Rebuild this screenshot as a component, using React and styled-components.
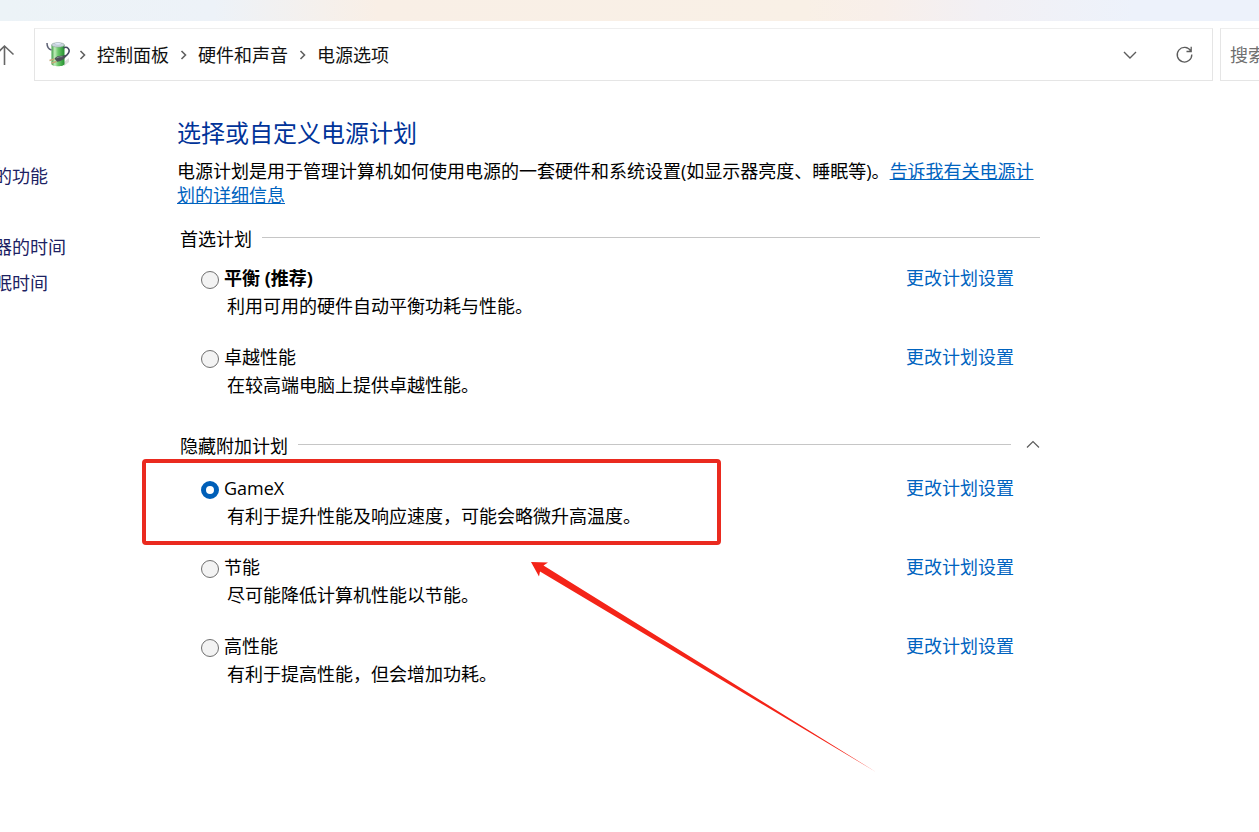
import React, { useState } from "react";
import styled, { createGlobalStyle } from "styled-components";

const GlobalStyle = createGlobalStyle`
    * {
        box-sizing: border-box;
    }

    body {
        margin: 0;
        background: #ffffff;
        color: #000000;
        font-family: "Open Sans", "Noto Sans CJK SC", sans-serif;
        font-size: 18px;
        line-height: 24px;
    }
`;

const Page = styled.div`
    min-height: 100vh;
`;

const TitleStrip = styled.div`
    height: 21px;
    background: linear-gradient(90deg, #ecf3f7 0%, #edf2f8 17%, #f9efe6 30%, #f9f0e6 64%, #f8efea 70%, #f2f0f4 78%, #edf2fb 90%, #edf2fb 100%);
`;

const Toolbar = styled.header`
    display: flex;
    align-items: stretch;
    height: 53px;
    margin-top: 7px;
`;

const UpButton = styled.button`
    display: flex;
    align-items: center;
    width: 34px;
    padding: 0;
    border: none;
    background: none;
    color: #666666;
`;

const AddressBar = styled.nav`
    display: flex;
    flex: 1;
    align-items: center;
    justify-content: space-between;
    padding: 0 18px 0 11px;
    border: 1px solid #e5e5e5;
    border-top-color: #eeeeee;
    margin-right: 7px;
`;

const Crumbs = styled.div`
    display: flex;
    align-items: center;
    gap: 10px;
`;

const Crumb = styled.a`
    color: #111111;
    text-decoration: none;
`;

const BarActions = styled.div`
    display: flex;
    align-items: center;
    gap: 37px;
`;

const IconButton = styled.button`
    display: flex;
    padding: 0;
    border: none;
    background: none;
    color: #5c5c5c;
    cursor: pointer;
`;

const SearchBox = styled.input`
    flex: 0 0 39px;
    min-width: 0;
    padding: 0 0 0 9px;
    border: 1px solid #e5e5e5;
    border-top-color: #eeeeee;
    border-right: none;
    font: inherit;
    outline: none;

    &::placeholder {
        color: #707070;
        opacity: 1;
    }
`;

const Body = styled.div`
    display: flex;
    align-items: flex-start;
    padding-top: 36px;
`;

const Sidebar = styled.aside`
    display: flex;
    flex-direction: column;
    flex: 0 0 183px;
    margin-left: -6px;
    padding-top: 41px;
    line-height: 36px;
`;

const SideLink = styled.a`
    color: #1d2263;
    text-decoration: none;

    &:first-child {
        margin-bottom: 35px;
    }
`;

const Main = styled.main`
    flex: 1;
    max-width: 863px;
`;

const Title = styled.h1`
    margin: 0 0 10px;
    color: #003399;
    font-size: 24px;
    font-weight: 400;
    line-height: 32px;
`;

const Intro = styled.p`
    margin: 0 0 20px;
`;

const TextLink = styled.a`
    color: #0063bf;
    text-decoration: ${props => (props.$underline ? "underline" : "none")};
`;

const Group = styled.section`
    margin-bottom: 32px;
`;

const GroupHead = styled.div`
    display: flex;
    align-items: center;
    min-height: ${props => (props.$tall ? "30px" : "24px")};
    margin-bottom: 13px;
    padding-left: 3px;
`;

const GroupName = styled.h2`
    margin: 0 10px 0 0;
    font-size: 18px;
    font-weight: 400;
`;

const Rule = styled.span`
    flex: 1;
    height: 1px;
    margin-right: ${props => (props.$tall ? "15px" : "0")};
    margin-bottom: 3px;
    background: #c6c6c6;
`;

const PlanList = styled.div`
    display: flex;
    flex-direction: column;
    gap: 23px;
`;

const PlanRow = styled.div`
    position: relative;
    display: flex;
    justify-content: space-between;
    padding: 0 26px 0 24px;
    line-height: 28px;
`;

const PlanLabel = styled.label`
    display: grid;
    grid-template-columns: 18px auto;
    column-gap: 5px;
    align-items: center;
    font-weight: ${props => (props.$bold ? 700 : 400)};
`;

const Radio = styled.input`
    appearance: none;
    width: 18px;
    height: 18px;
    margin: 4px 0 0;
    border: 1px solid #707070;
    border-radius: 50%;
    background: #f3f3f3;

    &:checked {
        border: 5px solid #005fb8;
        background: #ffffff;
    }
`;

const PlanNote = styled.p`
    margin: 0 0 0 26px;
`;

const Highlight = styled.div`
    position: absolute;
    top: -15px;
    bottom: -15px;
    left: -35px;
    width: 579px;
    border: 4px solid #ea2a1f;
    border-radius: 4px;
    pointer-events: none;
`;

const Arrow = styled.svg`
    position: absolute;
    top: 88px;
    left: 354px;
    pointer-events: none;
`;

const preferredPlans = [
    { id: "balanced", name: "平衡 (推荐)", note: "利用可用的硬件自动平衡功耗与性能。", bold: true },
    { id: "ultimate", name: "卓越性能", note: "在较高端电脑上提供卓越性能。" },
];

const extraPlans = [
    { id: "gamex", name: "GameX", note: "有利于提升性能及响应速度，可能会略微升高温度。", marked: true },
    { id: "saver", name: "节能", note: "尽可能降低计算机性能以节能。" },
    { id: "high", name: "高性能", note: "有利于提高性能，但会增加功耗。" },
];

const PowerIconSvg = styled.svg`
    margin-right: -3px;
`;

const PowerIcon = () => (
    <PowerIconSvg width="25" height="26" viewBox="0 0 25 26" aria-hidden="true">
        <defs>
            <linearGradient id="cell" x1="0" x2="1">
                <stop offset="0" stopColor="#3a9c42" />
                <stop offset="0.25" stopColor="#c0ebba" />
                <stop offset="0.5" stopColor="#6cc86b" />
                <stop offset="1" stopColor="#23902f" />
            </linearGradient>
        </defs>
        <path d="M18 20l5-4v4l-5 4z" fill="#dcdcdc" />
        <path d="M5.5 3v19c0 3 13 3 13 0V3z" fill="url(#cell)" />
        <ellipse cx="12" cy="2.900" rx="6.5" ry="2.2" fill="#c9d5dc" stroke="#8fa39b" strokeWidth="0.6" />
        <ellipse cx="12" cy="1.800" rx="3.2" ry="1.2" fill="#e3edf9" stroke="#9aa7b5" strokeWidth="0.4" />
        <path d="M1 1c0 4 1 6 4.500 7" fill="none" stroke="#5c6073" strokeWidth="1.5" />
        <path d="M17.500 6c4-2 7 1.500 5 5-1 1.500-2 2.500-4 4" fill="none" stroke="#464962" strokeWidth="1.5" />
        <path d="M8.500 16.500c2-2.500 5-3 7.500-2.800l4-1-0.500 2.500c-2 2.500-5 4-8.500 4.500z" fill="#4b5057" />
        <path d="M10.500 16c2-1 4-1.500 6-1.300" stroke="#969ba3" strokeWidth="0.8" fill="none" />
        <path d="M8.500 17l-5 1.500M10.500 19.500l-5 1.500" stroke="#c4a878" strokeWidth="1.400" />
    </PowerIconSvg>
);

const CrumbArrow = () => (
    <svg width="9" height="10" viewBox="0 0 9 10" aria-hidden="true">
        <path d="M2.500 1L6.500 5L2.500 9" fill="none" stroke="#606060" strokeWidth="1.600" />
    </svg>
);

const PlanGroup = ({ title, plans, selected, onSelect, collapsible }) => {
    const [open, setOpen] = useState(true);

    return (
        <Group>
            <GroupHead $tall={collapsible}>
                <GroupName>{title}</GroupName>
                <Rule $tall={collapsible} />
                {collapsible && (
                    <IconButton aria-label="展开或折叠" onClick={() => setOpen(!open)}>
                        <svg width="14" height="12" viewBox="0 0 14 12">
                            <path d="M1 7.500L7 1.500L13 7.500" fill="none" stroke="currentColor" strokeWidth="1.200" />
                        </svg>
                    </IconButton>
                )}
            </GroupHead>
            {open && (
                <PlanList>
                    {plans.map((plan) => (
                        <PlanRow key={plan.id}>
                            <div>
                                <PlanLabel $bold={plan.bold}>
                                    <Radio
                                        type="radio"
                                        name="power-plan"
                                        checked={selected == plan.id}
                                        onChange={() => onSelect(plan.id)}
                                    />
                                    {plan.name}
                                </PlanLabel>
                                <PlanNote>{plan.note}</PlanNote>
                            </div>
                            <TextLink href="#">更改计划设置</TextLink>
                            {plan.marked && (
                                <>
                                    <Highlight />
                                    <Arrow width="346" height="212" viewBox="0 0 346 212" aria-hidden="true">
                                        <path d="M0 0L17 0.500L12.500 3.500L345 210L9 9.500L8 14.500Z" fill="#f42418" />
                                    </Arrow>
                                </>
                            )}
                        </PlanRow>
                    ))}
                </PlanList>
            )}
        </Group>
    );
};

const App = () => {
    const [selected, setSelected] = useState("gamex");

    return (
        <Page>
            <GlobalStyle />
            <TitleStrip />
            <Toolbar>
                <UpButton aria-label="向上">
                    <svg width="15" height="22" viewBox="0 0 15 22">
                        <path d="M4.500 21V2M-4 10.500L4.500 2L13.500 10.500" fill="none" stroke="currentColor" strokeWidth="1.600" />
                    </svg>
                </UpButton>
                <AddressBar>
                    <Crumbs>
                        <PowerIcon />
                        <CrumbArrow />
                        <Crumb href="#">控制面板</Crumb>
                        <CrumbArrow />
                        <Crumb href="#">硬件和声音</Crumb>
                        <CrumbArrow />
                        <Crumb href="#">电源选项</Crumb>
                    </Crumbs>
                    <BarActions>
                        <IconButton aria-label="历史记录">
                            <svg width="14" height="10" viewBox="0 0 14 10">
                                <path d="M1 2L7 8L13 2" fill="none" stroke="currentColor" strokeWidth="1.400" />
                            </svg>
                        </IconButton>
                        <IconButton aria-label="刷新">
                            <svg width="20" height="18" viewBox="0 0 20 18">
                                <path d="M16.800 5A7.300 7.300 0 1 0 17.800 8.500M17.200 0.800V5.500H12.500" fill="none" stroke="currentColor" strokeWidth="1.300" />
                            </svg>
                        </IconButton>
                    </BarActions>
                </AddressBar>
                <SearchBox type="text" aria-label="搜索" placeholder="搜索" />
            </Toolbar>
            <Body>
                <Sidebar>
                    <SideLink href="#">的功能</SideLink>
                    <SideLink href="#">器的时间</SideLink>
                    <SideLink href="#">眠时间</SideLink>
                </Sidebar>
                <Main>
                    <Title>选择或自定义电源计划</Title>
                    <Intro>
                        电源计划是用于管理计算机如何使用电源的一套硬件和系统设置(如显示器亮度、睡眠等)。
                        <TextLink href="#" $underline>告诉我有关电源计划的详细信息</TextLink>
                    </Intro>
                    <PlanGroup title="首选计划" plans={preferredPlans} selected={selected} onSelect={setSelected} />
                    <PlanGroup title="隐藏附加计划" plans={extraPlans} selected={selected} onSelect={setSelected} collapsible />
                </Main>
            </Body>
        </Page>
    );
};

export default App;
